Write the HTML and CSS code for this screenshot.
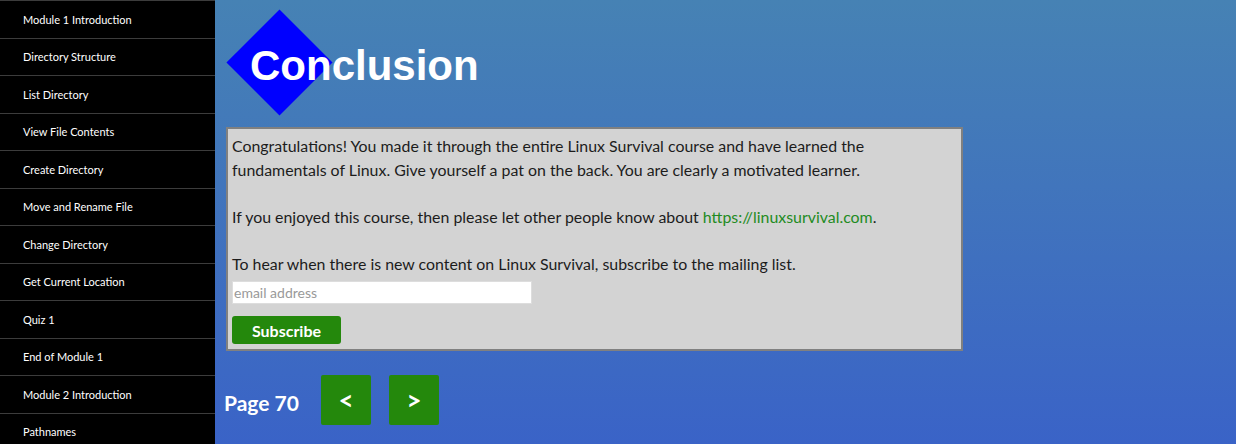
FILE: index.html
```html
<!DOCTYPE html>
<html>
<head>
<meta charset="utf-8">
<link rel="stylesheet" href="styles.css">
</head>
<body>
<nav class="sidebar">
  <a class="nav-item">Module 1 Introduction</a>
  <a class="nav-item">Directory Structure</a>
  <a class="nav-item">List Directory</a>
  <a class="nav-item">View File Contents</a>
  <a class="nav-item">Create Directory</a>
  <a class="nav-item">Move and Rename File</a>
  <a class="nav-item">Change Directory</a>
  <a class="nav-item">Get Current Location</a>
  <a class="nav-item">Quiz 1</a>
  <a class="nav-item">End of Module 1</a>
  <a class="nav-item">Module 2 Introduction</a>
  <a class="nav-item">Pathnames</a>
</nav>
<main class="main">
  <h1 class="title"><span class="title-text">Conclusion</span></h1>
  <section class="card">
    <p class="para">Congratulations! You made it through the entire Linux Survival course and have learned the fundamentals of Linux. Give yourself a pat on the back. You are clearly a motivated learner.</p>
    <p class="para">If you enjoyed this course, then please let other people know about <a class="link">https://linuxsurvival.com</a>.</p>
    <p class="para">To hear when there is new content on Linux Survival, subscribe to the mailing list.</p>
    <input class="email" type="text" placeholder="email address">
    <button class="subscribe">Subscribe</button>
  </section>
  <div class="pager">
    <span class="page-num">Page 70</span>
    <button class="page-btn">&lt;</button>
    <button class="page-btn">&gt;</button>
  </div>
</main>
</body>
</html>
```
FILE: styles.css
```css
html, body {
  margin: 0;
  padding: 0;
  height: 100%;
}
body {
  display: flex;
  font-family: Lato, "Open Sans", sans-serif;
  background: linear-gradient(#4682b4, #3a63c7);
  overflow: hidden;
}
.sidebar {
  width: 215px;
  flex: 0 0 215px;
  background: #000;
  display: flex;
  flex-direction: column;
}
.nav-item {
  box-sizing: border-box;
  height: 37.5px;
  flex: 0 0 37.5px;
  border-top: 1px solid #3c3c3c;
  color: #fff;
  font-size: 11px;
  padding-left: 23px;
  display: flex;
  align-items: center;
}
.main {
  flex: 1;
  padding-left: 11px;
}
.title {
  position: relative;
  margin: 0;
  height: 112px;
  display: flex;
  align-items: center;
}
.title::before {
  content: "";
  position: absolute;
  left: 16px;
  top: 25px;
  width: 75px;
  height: 75px;
  background: #0000ff;
  transform: rotate(45deg);
}
.title-text {
  position: relative;
  font-family: "Liberation Sans", Arial, sans-serif;
  font-size: 42px;
  font-weight: bold;
  color: #fff;
  margin-left: 24px;
  margin-top: 20px;
}
.card {
  box-sizing: border-box;
  width: 737px;
  margin-top: 15px;
  background: #d3d3d3;
  border: 2px solid #808080;
  padding: 5px 4px 5px 4px;
  color: #1c1c1c;
  font-size: 15.9px;
  line-height: 24px;
}
.para {
  margin: 0 0 23px 0;
}
.para:nth-of-type(3) {
  margin-bottom: 5px;
}
.link {
  color: #228b22;
}
.email {
  display: block;
  box-sizing: border-box;
  width: 300px;
  height: 23px;
  border: 1px solid #ddd;
  background: #fff;
  font-family: Lato, sans-serif;
  font-size: 14px;
  padding: 0 1px;
  margin: 0;
}
.email::placeholder {
  color: #999;
}
.subscribe {
  display: block;
  margin-top: 12px;
  width: 109px;
  height: 28px;
  border: none;
  border-radius: 3px;
  background: #24880c;
  color: #fff;
  font-family: Lato, sans-serif;
  font-size: 16px;
  font-weight: bold;
}
.pager {
  display: flex;
  align-items: center;
  margin-top: 24px;
  margin-left: -2px;
}
.page-num {
  color: #fff;
  font-size: 21px;
  font-weight: bold;
  margin-right: 22px;
  margin-top: 4px;
}
.page-btn {
  width: 50px;
  height: 50px;
  border: none;
  border-radius: 2px;
  background: #24880c;
  color: #fff;
  font-family: Lato, sans-serif;
  font-size: 26px;
  font-weight: bold;
  margin-right: 18px;
  padding: 0;
}
```
